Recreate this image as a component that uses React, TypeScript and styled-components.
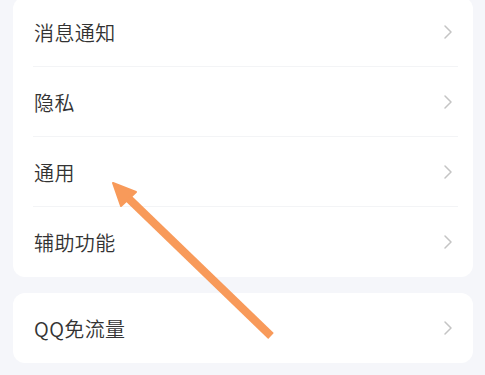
import React from 'react';
import styled, { createGlobalStyle } from 'styled-components';

// #region styles

const GlobalStyle = createGlobalStyle`
  html, body {
    margin: 0;
    padding: 0;
    background: #f5f6fa;
    font-family: "Noto Sans CJK SC", "Noto Sans", sans-serif;
  }
`;

const Page = styled.div`
  position: relative;
  width: 485px;
  height: 375px;
  overflow: hidden;
  box-sizing: border-box;
  padding: 0 12px 0 13px;
  display: flex;
  flex-direction: column;
  gap: 16px;
`;

const Card = styled.div<{ $top?: number }>`
  background: #ffffff;
  border-radius: 12px;
  margin-top: ${(props) => props.$top ?? 0}px;
  display: flex;
  flex-direction: column;
`;

const Row = styled.div<{ $divider: boolean }>`
  height: 70px;
  display: flex;
  align-items: center;
  padding: 0 20px 0 21px;
  box-sizing: border-box;
  position: relative;
  &::after {
    content: '';
    display: ${(props) => (props.$divider ? 'block' : 'none')};
    position: absolute;
    left: 20px;
    right: 15px;
    bottom: 0;
    height: 1px;
    background: #f3f4f6;
  }
`;

const Label = styled.span`
  flex: 1;
  font-size: 20px;
  font-weight: 350;
  color: #333333;
  letter-spacing: 0.4px;
`;

const Chevron = styled.svg`
  width: 10px;
  height: 16px;
  flex: none;
`;

const ArrowLayer = styled.svg`
  position: absolute;
  left: 0;
  top: 0;
  pointer-events: none;
`;
// #endregion styles

const ChevronIcon = () => (
  <Chevron viewBox="0 0 10 16">
    <path d="M2 2 L8 8 L2 14" fill="none" stroke="#c4c4c4" strokeWidth="1.5" strokeLinecap="round" strokeLinejoin="round" />
  </Chevron>
);

const SettingRow = (props: { label: string; divider: boolean }) => (
  <Row $divider={props.divider}>
    <Label>{props.label}</Label>
    <ChevronIcon />
  </Row>
);

const mainItems = ['消息通知', '隐私', '通用', '辅助功能'];

export default function App() {
  return (
    <>
      <GlobalStyle />
      <Page>
        <Card $top={-3}>
          {mainItems.map((label, k) => (
            <SettingRow key={'item' + k} label={label} divider={k < mainItems.length - 1} />
          ))}
        </Card>
        <Card>
          <SettingRow label="QQ免流量" divider={false} />
        </Card>
        <ArrowLayer width="485" height="375" viewBox="0 0 485 375">
          <line x1="271" y1="336" x2="126" y2="196" stroke="#f89a5a" strokeWidth="8" strokeLinecap="butt" />
          <polygon points="113,183 136,192 121,206" fill="#f89a5a" stroke="#f89a5a" strokeWidth="2" strokeLinejoin="round" />
        </ArrowLayer>
      </Page>
    </>
  );
}
